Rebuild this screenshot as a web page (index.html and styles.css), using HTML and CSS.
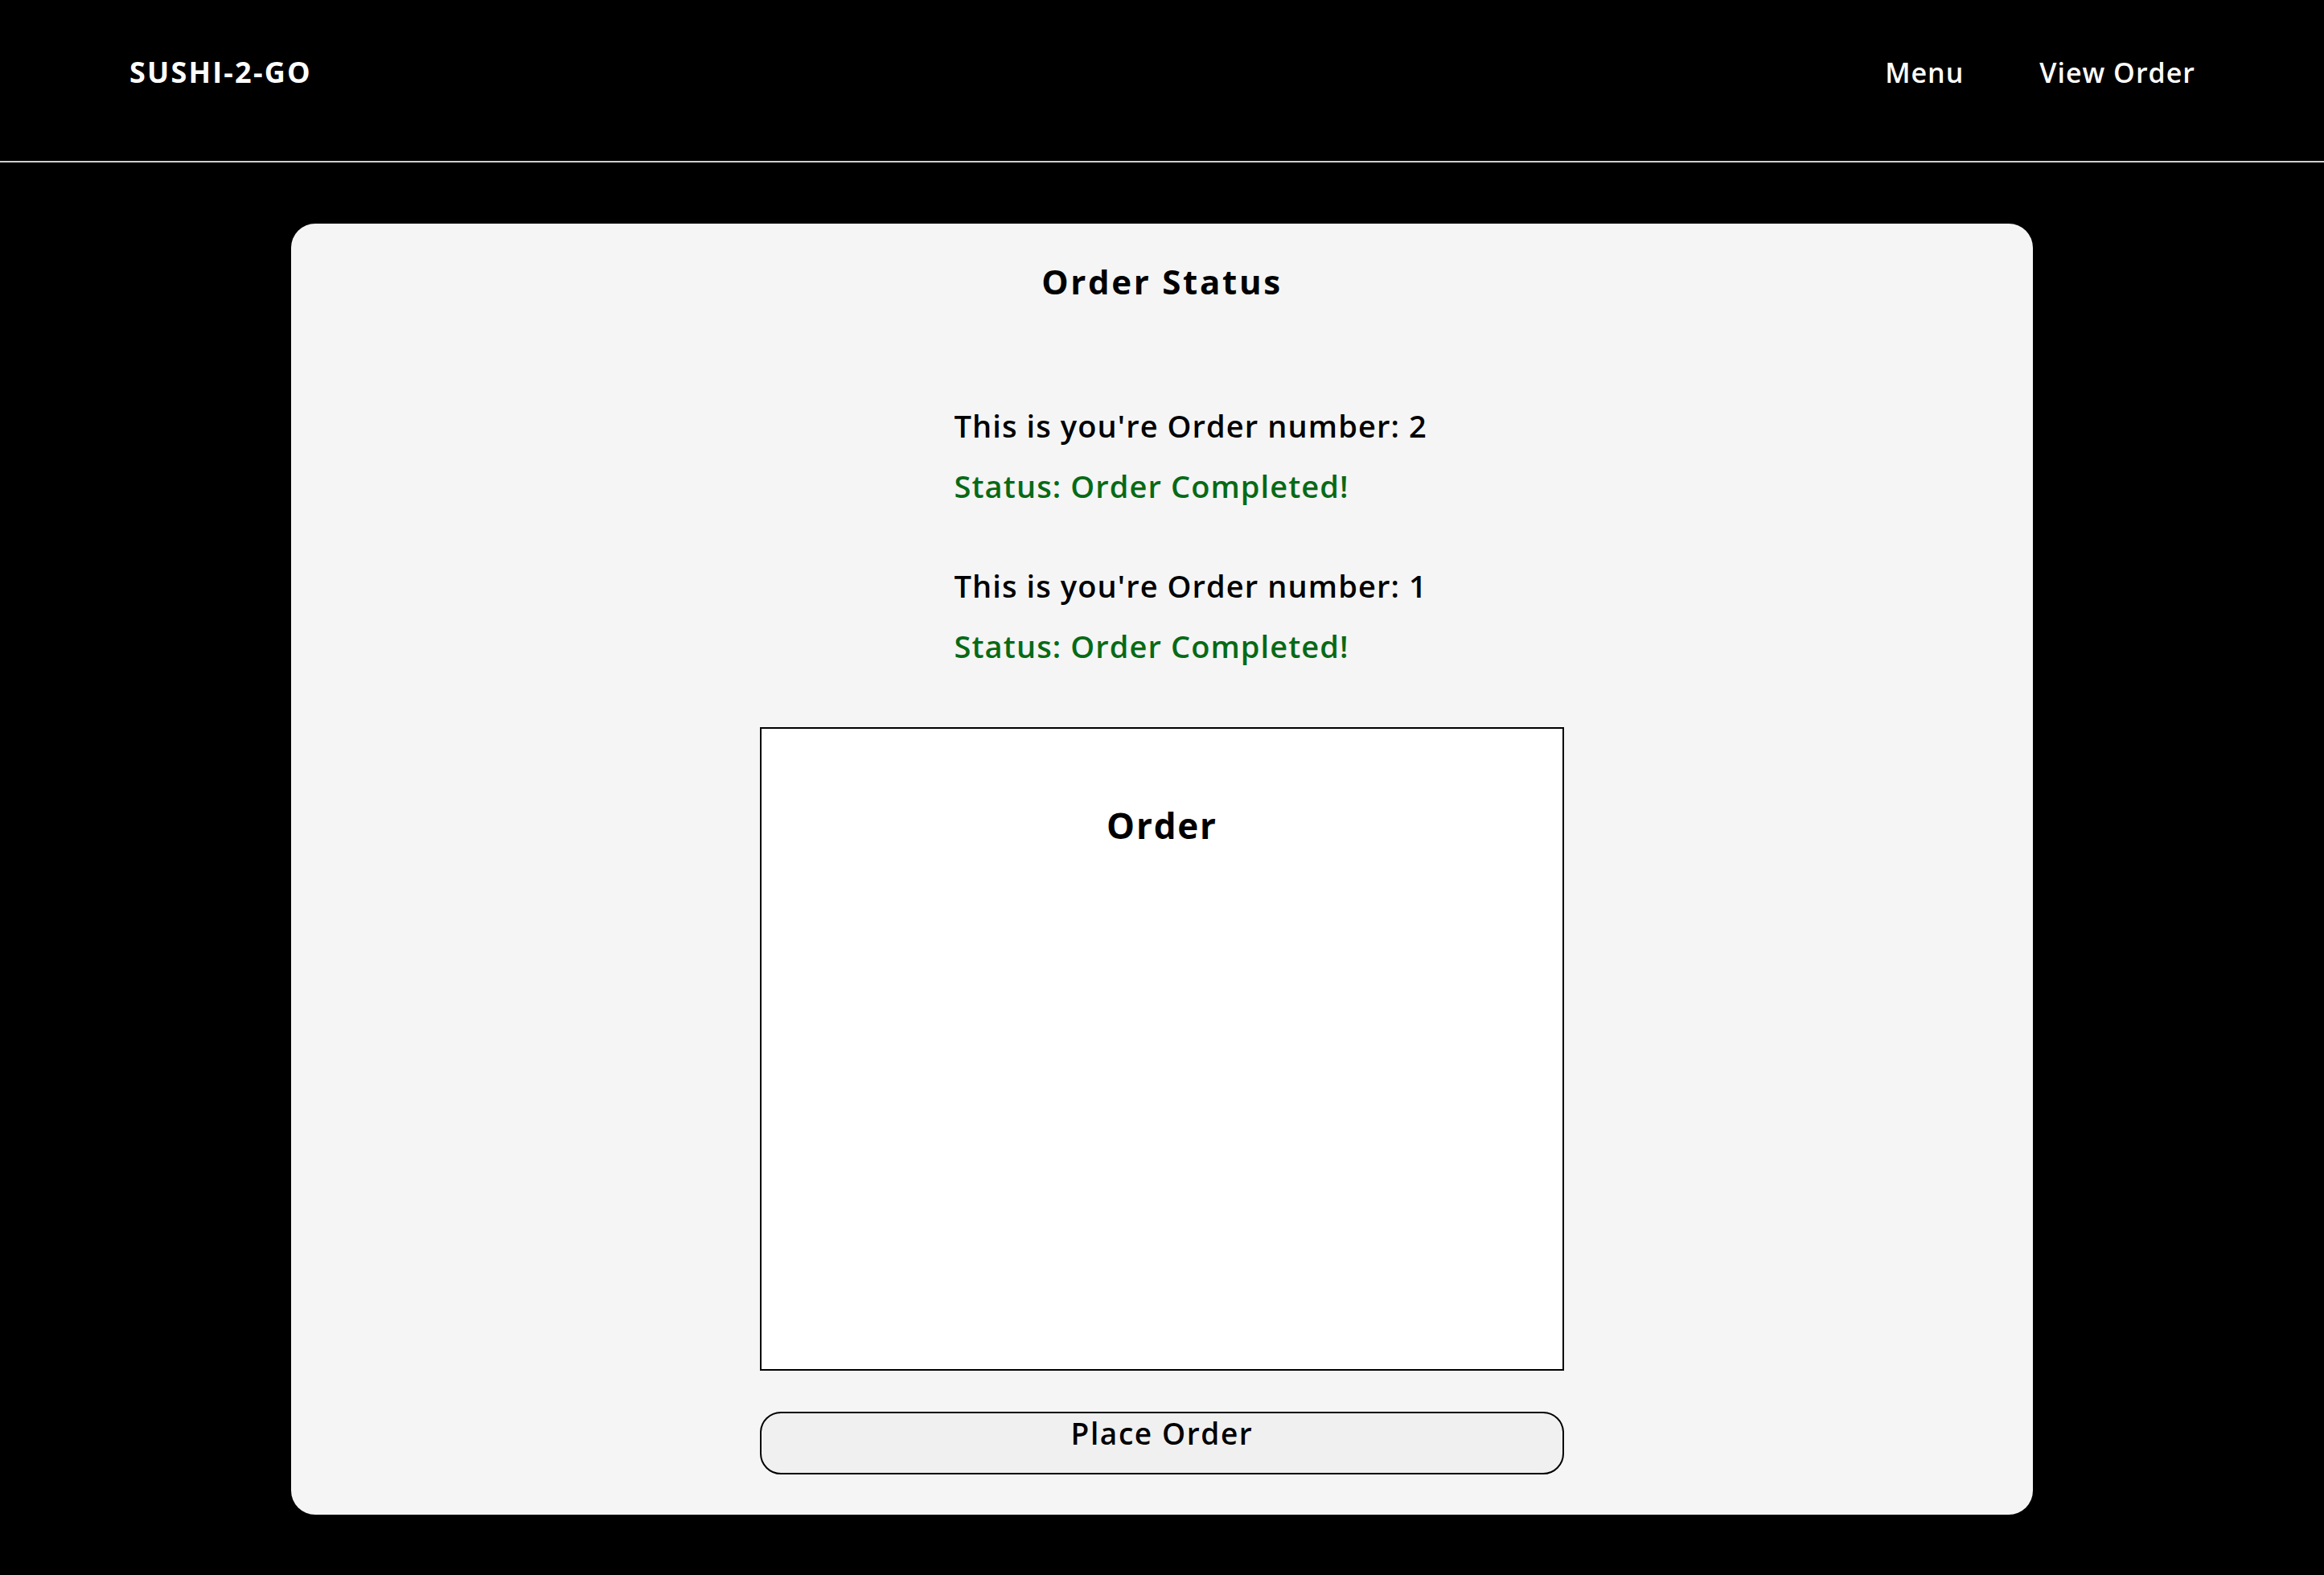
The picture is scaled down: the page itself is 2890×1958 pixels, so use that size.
FILE: index.html
```html
<!DOCTYPE html>
<html lang="en">
<head>
<meta charset="utf-8">
<title>Sushi-2-Go</title>
<link rel="stylesheet" href="styles.css">
</head>
<body>
<header class="site-header">
  <div class="logo">SUSHI-2-GO</div>
  <nav class="nav">
    <a class="nav-link" href="#">Menu</a>
    <a class="nav-link" href="#">View Order</a>
  </nav>
</header>
<main class="card">
  <h1 class="card-title">Order Status</h1>
  <div class="orders">
    <div class="order">
      <p class="order-number">This is you're Order number: 2</p>
      <p class="order-status">Status: Order Completed!</p>
    </div>
    <div class="order">
      <p class="order-number">This is you're Order number: 1</p>
      <p class="order-status">Status: Order Completed!</p>
    </div>
  </div>
  <section class="order-box">
    <h2 class="order-box-title">Order</h2>
  </section>
  <button class="place-btn" type="button">Place Order</button>
</main>
</body>
</html>
```
FILE: styles.css
```css
html, body {
  margin: 0;
  padding: 0;
}
body {
  background: #000;
  font-family: "Open Sans", "DejaVu Sans", sans-serif;
  color: #000;
  min-height: 1958px;
}
.site-header {
  height: 200px;
  box-sizing: content-box;
  padding: 0 160px 0 161px;
  display: flex;
  justify-content: space-between;
  align-items: baseline;
  border-bottom: 2px solid #cfcfcf;
}
.logo {
  color: #fff;
  font-size: 36px;
  font-weight: 700;
  line-height: 48px;
  letter-spacing: 2.2px;
  margin-top: 66px;
}
.nav {
  display: flex;
  gap: 94px;
  align-items: baseline;
}
.nav-link {
  color: #fff;
  text-decoration: none;
  font-size: 34px;
  font-weight: 600;
  line-height: 45px;
  letter-spacing: 1px;
}
.card {
  width: 2166px;
  margin: 76px auto 0;
  box-sizing: border-box;
  background: #f5f5f5;
  border-radius: 30px;
  padding: 45px 0 50px;
  display: flex;
  flex-direction: column;
  align-items: center;
}
.card-title {
  margin: 0;
  font-size: 42px;
  font-weight: 700;
  line-height: 54px;
  letter-spacing: 2.7px;
}
.orders {
  width: 516px;
  margin: 127px 0 0 -1px;
  display: flex;
  flex-direction: column;
  gap: 74px;
}
.order {
  display: flex;
  flex-direction: column;
  gap: 25px;
}
.order p {
  margin: 0;
  font-size: 38px;
  font-weight: 600;
  line-height: 50px;
  letter-spacing: 1.1px;
  white-space: nowrap;
}
.order-number {
  color: #000;
}
.order-status {
  color: #076a16;
}
.order-box {
  margin-top: 76px;
  width: 1000px;
  height: 800px;
  box-sizing: border-box;
  background: #fff;
  border: 2px solid #000;
  padding-top: 90px;
  display: flex;
  flex-direction: column;
  align-items: center;
}
.order-box-title {
  margin: 0;
  font-size: 44px;
  font-weight: 700;
  line-height: 60px;
  letter-spacing: 1.8px;
}
.place-btn {
  margin-top: 51px;
  width: 1000px;
  height: 78px;
  box-sizing: border-box;
  background: #f0f0f0;
  border: 2px solid #000;
  border-radius: 26px;
  padding: 0;
  display: flex;
  justify-content: center;
  align-items: flex-start;
  font-family: "Open Sans", "DejaVu Sans", sans-serif;
  font-size: 37px;
  font-weight: 600;
  line-height: 50px;
  letter-spacing: 1.6px;
  color: #000;
}
```
